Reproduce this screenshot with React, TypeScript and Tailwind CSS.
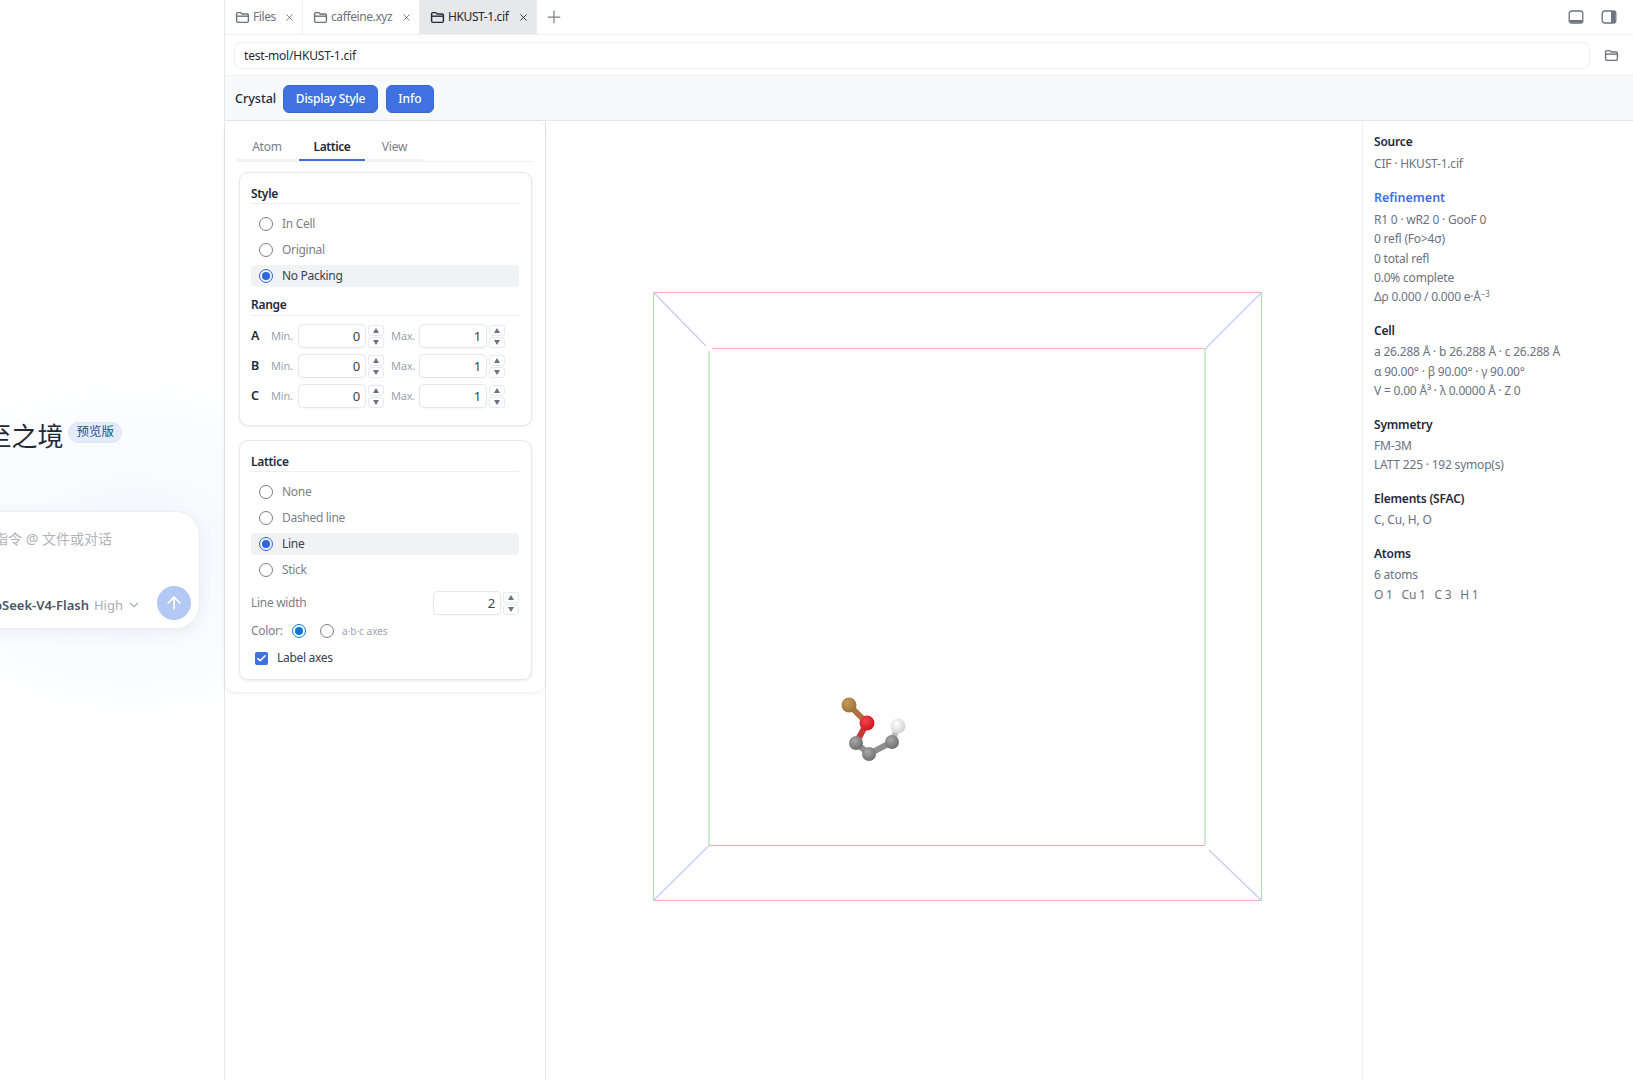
import React from 'react';
import { ChevronDown, ArrowUp, Plus, X, Check } from 'lucide-react';

const FolderIcon = ({ className }: { className?: string }) => (
  <svg viewBox="0 0 16 16" className={className} fill="none" stroke="currentColor" strokeWidth="1.5">
    <path d="M1.7 4.2c0-.8.6-1.4 1.4-1.4h2.6c.4 0 .7.1 1 .4l1 1h5.2c.8 0 1.4.6 1.4 1.4v6.2c0 .8-.6 1.4-1.4 1.4H3.1c-.8 0-1.4-.6-1.4-1.4z" />
    <path d="M1.7 6.6h12.6" />
  </svg>
);

const Tab = ({ label, active, width }: { label: string; active?: boolean; width: string }) => (
  <div className={`flex items-center h-full pl-[10px] border-r border-[#eceef1] ${width} ${active ? 'bg-[#e7e8ea] text-[#1f2937]' : 'text-[#6b7280]'}`}>
    <FolderIcon className="w-[15px] h-[15px] shrink-0" />
    <span className="ml-[3px] text-[12px] tracking-[-0.4px] flex-1 whitespace-nowrap">{label}</span>
    <X className="w-[11px] h-[11px] mr-[7px] shrink-0" strokeWidth={2} />
  </div>
);

const Radio = ({ on, color = 'border-[#2f66e0]', dot = 'bg-[#2f66e0]' }: { on?: boolean; color?: string; dot?: string }) => (
  <span className={`flex items-center justify-center w-[14px] h-[14px] rounded-full border-[1.5px] shrink-0 ${on ? color : 'border-[#7d7d7d]'}`}>
    {on && <span className={`w-[8px] h-[8px] rounded-full ${dot}`} />}
  </span>
);

const RadioRow = ({ label, on }: { label: string; on?: boolean }) => (
  <div className={`flex items-center h-[22px] pl-[8px] gap-[9px] rounded-[4px] ${on ? 'bg-[#f1f2f4] text-[#374151]' : 'text-[#7b8087]'}`}>
    <Radio on={on} />
    <span className="text-[12px] tracking-[-0.3px]">{label}</span>
  </div>
);

const Spinner = () => (
  <div className="flex flex-col gap-[1px] w-[16px]">
    <div className="flex items-center justify-center h-[11px] rounded-[3px] border border-[#e8e9ec]">
      <span className="w-0 h-0 border-x-[3.5px] border-x-transparent border-b-[5px] border-b-[#6b7280]" />
    </div>
    <div className="flex items-center justify-center h-[11px] rounded-[3px] border border-[#e8e9ec]">
      <span className="w-0 h-0 border-x-[3.5px] border-x-transparent border-t-[5px] border-t-[#6b7280]" />
    </div>
  </div>
);

const NumBox = ({ value }: { value: string }) => (
  <input
    readOnly
    value={value}
    className="w-[68px] h-[24px] rounded-[5px] border border-[#e5e7eb] bg-white pr-[5px] text-right text-[13px] text-[#374151] shadow-[0_1px_3px_rgba(0,0,0,0.04)] outline-none"
  />
);

const RangeRow = ({ axis, min, max }: { axis: string; min: string; max: string }) => (
  <div className="flex items-center h-[24px] text-[11px] tracking-[-0.2px] text-[#9ca3af]">
    <span className="w-[20px] text-[12.5px] font-semibold text-[#1f2937]">{axis}</span>
    <span className="w-[27px]">Min.</span>
    <NumBox value={min} />
    <span className="ml-[2px]"><Spinner /></span>
    <span className="ml-[7px] w-[28px]">Max.</span>
    <NumBox value={max} />
    <span className="ml-[2px]"><Spinner /></span>
  </div>
);

const Heading = ({ children, className = '' }: { children: React.ReactNode; className?: string }) => (
  <div className={`h-[20px] flex items-center border-b border-[#eceef1] pt-[1px] text-[12px] tracking-[-0.3px] font-semibold text-[#1f2937] ${className}`}>{children}</div>
);

const Card = ({ children, className = '' }: { children: React.ReactNode; className?: string }) => (
  <div className={`mx-[2px] rounded-[9px] border border-[#e6e8eb] bg-white pl-[11px] pr-[12px] pt-[11px] shadow-[0_1px_3px_rgba(0,0,0,0.08)] ${className}`}>{children}</div>
);

const StylePanel = () => (
  <div className="w-[320px] h-[571px] rounded-[11px] bg-white pl-[12px] pr-[11px] shadow-[0_1px_4px_rgba(0,0,0,0.09)]">
    <div className="flex h-[41px] border-b border-[#eff0f2] text-[12px] tracking-[-0.2px] text-[#7b8087]">
      <div className="flex items-center justify-center w-[60px] border-b-2 border-[#f1f2f4] pt-[21px] pb-[7px]">Atom</div>
      <div className="flex items-center justify-center w-[66px] ml-[2px] border-b-2 border-[#3f72e0] pt-[21px] pb-[7px] tracking-[-0.4px] font-semibold text-[#1f2937]">Lattice</div>
      <div className="flex items-center justify-center w-[55px] ml-[2px] border-b-2 border-[#f1f2f4] pt-[21px] pb-[7px]">View</div>
    </div>
    <Card className="mt-[10px] pb-[17px]">
      <Heading>Style</Heading>
      <div className="mt-[9px] flex flex-col gap-[4px]">
        <RadioRow label="In Cell" />
        <RadioRow label="Original" />
        <RadioRow label="No Packing" on />
      </div>
      <Heading className="mt-[9px] pb-[2px]">Range</Heading>
      <div className="mt-[8px] flex flex-col gap-[6px]">
        <RangeRow axis="A" min="0" max="1" />
        <RangeRow axis="B" min="0" max="1" />
        <RangeRow axis="C" min="0" max="1" />
      </div>
    </Card>
    <Card className="mt-[14px] pb-[11px]">
      <Heading>Lattice</Heading>
      <div className="mt-[9px] flex flex-col gap-[4px]">
        <RadioRow label="None" />
        <RadioRow label="Dashed line" />
        <RadioRow label="Line" on />
        <RadioRow label="Stick" />
      </div>
      <div className="mt-[10px] flex items-center justify-between h-[24px] text-[12px] tracking-[-0.3px] text-[#7b8087]">
        <span>Line width</span>
        <div className="flex items-center gap-[2px]">
          <NumBox value="2" />
          <Spinner />
        </div>
      </div>
      <div className="mt-[6px] flex items-center h-[20px] text-[12px] tracking-[-0.3px] text-[#7b8087]">
        <span className="w-[41px]">Color:</span>
        <Radio on color="border-[#0b78d0]" dot="bg-[#0b78d0]" />
        <span className="ml-[14px]"><Radio /></span>
        <span className="ml-[8px] text-[10px] tracking-normal text-[#9ca3af]">a·b·c axes</span>
      </div>
      <div className="mt-[7px] flex items-center h-[20px] pl-[4px] gap-[9px] text-[12px] tracking-[-0.3px] text-[#374151]">
        <span className="flex items-center justify-center w-[13px] h-[13px] rounded-[2px] bg-[#3f72e0]">
          <Check className="w-[11px] h-[11px] text-white" strokeWidth={3.5} />
        </span>
        <span>Label axes</span>
      </div>
    </Card>
  </div>
);

// the crystal view: viewBox uses page coordinates
const Viewer = () => (
  <svg viewBox="546 121 816 959" className="flex-1 min-w-0 h-full">
    <defs>
      <radialGradient id="cu" cx="0.4" cy="0.35" r="0.7"><stop offset="0" stopColor="#c49a5c" /><stop offset="1" stopColor="#9c6f30" /></radialGradient>
      <radialGradient id="o" cx="0.4" cy="0.35" r="0.7"><stop offset="0" stopColor="#f2454c" /><stop offset="1" stopColor="#c9161f" /></radialGradient>
      <radialGradient id="c" cx="0.4" cy="0.35" r="0.7"><stop offset="0" stopColor="#a8a8a8" /><stop offset="1" stopColor="#6b6b6b" /></radialGradient>
      <radialGradient id="h" cx="0.4" cy="0.35" r="0.7"><stop offset="0" stopColor="#ffffff" /><stop offset="1" stopColor="#cfcfcf" /></radialGradient>
    </defs>
    <g fill="none" strokeWidth="1.2">
      <g stroke="#f4abb0">
        <path d="M653 292.5H1262" />
        <path d="M653 900.5H1262" />
        <path d="M712 348.5H1205" />
        <path d="M709 845.5H1205" />
      </g>
      <g stroke="#b0dcb0">
        <path d="M653.5 292V901" />
        <path d="M1261.5 292V901" />
        <path d="M709 351V845" />
        <path d="M1205 348V845" />
      </g>
      <g stroke="#c2ccf4">
        <path d="M653.5 292.5L706 346" />
        <path d="M1261.5 292.5L1205.5 348.5" />
        <path d="M653.5 900.5L709 845.5" />
        <path d="M1261.5 900.5L1209 850" />
      </g>
    </g>
    <g fill="none" strokeWidth="6">
      <path d="M849 705L867 723" stroke="#b0703f" />
      <path d="M867 723L856 743" stroke="#c9363c" />
      <path d="M856 743L869 754L892 742" stroke="#8f8f8f" />
      <path d="M892 742L898 726" stroke="#bcbcbc" />
    </g>
    <circle cx="849" cy="705" r="7.5" fill="url(#cu)" />
    <circle cx="856" cy="743" r="7" fill="url(#c)" />
    <circle cx="869" cy="754" r="7" fill="url(#c)" />
    <circle cx="892" cy="742" r="7" fill="url(#c)" />
    <circle cx="867" cy="723" r="7.5" fill="url(#o)" />
    <circle cx="898" cy="726" r="7.5" fill="url(#h)" />
  </svg>
);

const InfoBlock = ({ title, lines, accent }: { title: string; lines: React.ReactNode[]; accent?: boolean }) => (
  <div className={accent ? 'mt-[1.5px]' : ''}>
    <div className={`h-[20px] flex items-center font-semibold ${accent ? 'text-[12.5px] text-[#3b6fe8]' : 'text-[12px] tracking-[-0.2px] text-[#1f2937]'}`}>{title}</div>
    <div className="mt-[1.5px] text-[12px] tracking-[-0.2px] leading-[19.4px] text-[#6b7280]">
      {lines.map((line, i) => <div key={i} className="h-[19.4px] whitespace-pre">{line}</div>)}
    </div>
  </div>
);

const InfoPane = () => (
  <div className="w-[271px] shrink-0 border-l border-[#eef0f3] pl-[11px] pt-[11px] flex flex-col gap-[14px]">
    <InfoBlock title="Source" lines={['CIF · HKUST-1.cif']} />
    <InfoBlock title="Refinement" accent lines={[
      'R1 0 · wR2 0 · GooF 0',
      '0 refl (Fo>4σ)',
      '0 total refl',
      '0.0% complete',
      <>Δρ 0.000 / 0.000 e·Å<sup className="text-[8px] leading-none">−3</sup></>,
    ]} />
    <InfoBlock title="Cell" lines={[
      'a 26.288 Å · b 26.288 Å · c 26.288 Å',
      'α 90.00° · β 90.00° · γ 90.00°',
      'V = 0.00 Å³ · λ 0.0000 Å · Z 0',
    ]} />
    <InfoBlock title="Symmetry" lines={['FM-3M', 'LATT 225 · 192 symop(s)']} />
    <InfoBlock title="Elements (SFAC)" lines={['C, Cu, H, O']} />
    <InfoBlock title="Atoms" lines={['6 atoms', 'O 1   Cu 1   C 3   H 1']} />
  </div>
);

const ChatPane = () => (
  <div className="w-[225px] shrink-0 h-full overflow-hidden border-r border-[#e5e7eb] bg-[radial-gradient(ellipse_280px_190px_at_60%_550px,#f5f7fd_0%,#ffffff_100%)] flex flex-col items-end pt-[419px]">
    <div className="flex items-start gap-[5px] pr-[102px] whitespace-nowrap">
      <span className="text-[26px] leading-[34px] text-[#1f2937]">欢迎来到臻至之境</span>
      <span className="mt-[3px] px-[7px] h-[21px] flex items-center rounded-full bg-[#e4ecfa] border border-[#dbe5f7] text-[12.5px] text-[#2d4f8e]">预览版</span>
    </div>
    <div className="mr-[24px] mt-[58px] w-[600px] h-[118px] shrink-0 rounded-[24px] bg-white border border-[#eceef2] shadow-[0_4px_14px_rgba(60,80,140,0.08)] flex flex-col justify-between pr-[8px] pb-[8px]">
      <div className="mt-[16px] pr-[79px] text-right text-[14px] text-[#b0b4ba]">输入指令 @ 文件或对话</div>
      <div className="flex items-center justify-end">
        <span className="mt-[5px] text-[13px] font-semibold text-[#4b5563]">DeepSeek-V4-Flash</span>
        <span className="mt-[5px] ml-[5px] text-[13px] text-[#a8adb5]">High</span>
        <ChevronDown className="mt-[4px] ml-[4px] w-[14px] h-[14px] text-[#a8adb5]" />
        <span className="ml-[16px] flex items-center justify-center w-[34px] h-[34px] rounded-full bg-[#b3c8f4]">
          <ArrowUp className="w-[20px] h-[20px] text-white" strokeWidth={2} />
        </span>
      </div>
    </div>
  </div>
);

export default function App() {
  return (
    <div className="flex w-[1633px] h-[1080px] overflow-hidden bg-white font-['Noto_Sans','Noto_Sans_CJK_SC',sans-serif]">
      <ChatPane />
      <div className="flex-1 min-w-0 flex flex-col">
        {/* tabs */}
        <div className="flex items-center h-[35px] shrink-0 border-b border-[#eef0f3]">
          <Tab label="Files" width="w-[78px]" />
          <Tab label="caffeine.xyz" width="w-[117px]" />
          <Tab label="HKUST-1.cif" width="w-[117px]" active />
          <Plus className="ml-[7px] w-[20px] h-[20px] text-[#7b8087]" strokeWidth={1.5} />
          <div className="ml-auto flex items-center gap-[17px] pr-[16px] text-[#6b7280]">
            <svg viewBox="0 0 16 16" className="w-[16px] h-[16px]" fill="none" stroke="currentColor" strokeWidth="1.3">
              <rect x="1.2" y="2" width="13.6" height="12" rx="2.6" />
              <path d="M2 11h12v1.2c0 .7-.6 1.3-1.3 1.3H3.3c-.7 0-1.3-.6-1.3-1.3z" fill="currentColor" stroke="none" />
            </svg>
            <svg viewBox="0 0 16 16" className="w-[16px] h-[16px]" fill="none" stroke="currentColor" strokeWidth="1.3">
              <rect x="1.2" y="2" width="13.6" height="12" rx="2.6" />
              <path d="M10 2.5h2.7c.7 0 1.3.6 1.3 1.3v8.4c0 .7-.6 1.3-1.3 1.3H10z" fill="currentColor" stroke="none" />
            </svg>
          </div>
        </div>
        {/* path */}
        <div className="flex items-center h-[41px] shrink-0 border-b border-[#eef0f3] pl-[9px] pr-[14px]">
          <div className="flex-1 h-[27px] flex items-center rounded-[6px] border border-[#f0f1f3] px-[9px] pt-[2px] text-[12px] tracking-[-0.2px] text-[#1f2937]">test-mol/HKUST-1.cif</div>
          <FolderIcon className="ml-[14px] w-[15px] h-[15px] text-[#6b7280]" />
        </div>
        {/* toolbar */}
        <div className="flex items-center h-[45px] shrink-0 gap-[8px] border-b border-[#e5e7eb] bg-[#f8f9fb] pl-[10px] pt-[2px]">
          <span className="w-[40px] whitespace-nowrap text-[12.5px] font-medium text-[#1f2937]">Crystal</span>
          <button className="w-[95px] h-[28px] rounded-[6px] border border-[#3a68cf] bg-[#3f72e0] text-[12px] tracking-[-0.25px] font-medium text-white">Display Style</button>
          <button className="w-[48px] h-[28px] rounded-[6px] border border-[#3a68cf] bg-[#3f72e0] text-[12px] font-medium text-white">Info</button>
        </div>
        <div className="flex flex-1 min-h-0">
          <div className="w-[321px] shrink-0 border-r border-[#e8eaed]">
            <StylePanel />
          </div>
          <Viewer />
          <InfoPane />
        </div>
      </div>
    </div>
  );
}
